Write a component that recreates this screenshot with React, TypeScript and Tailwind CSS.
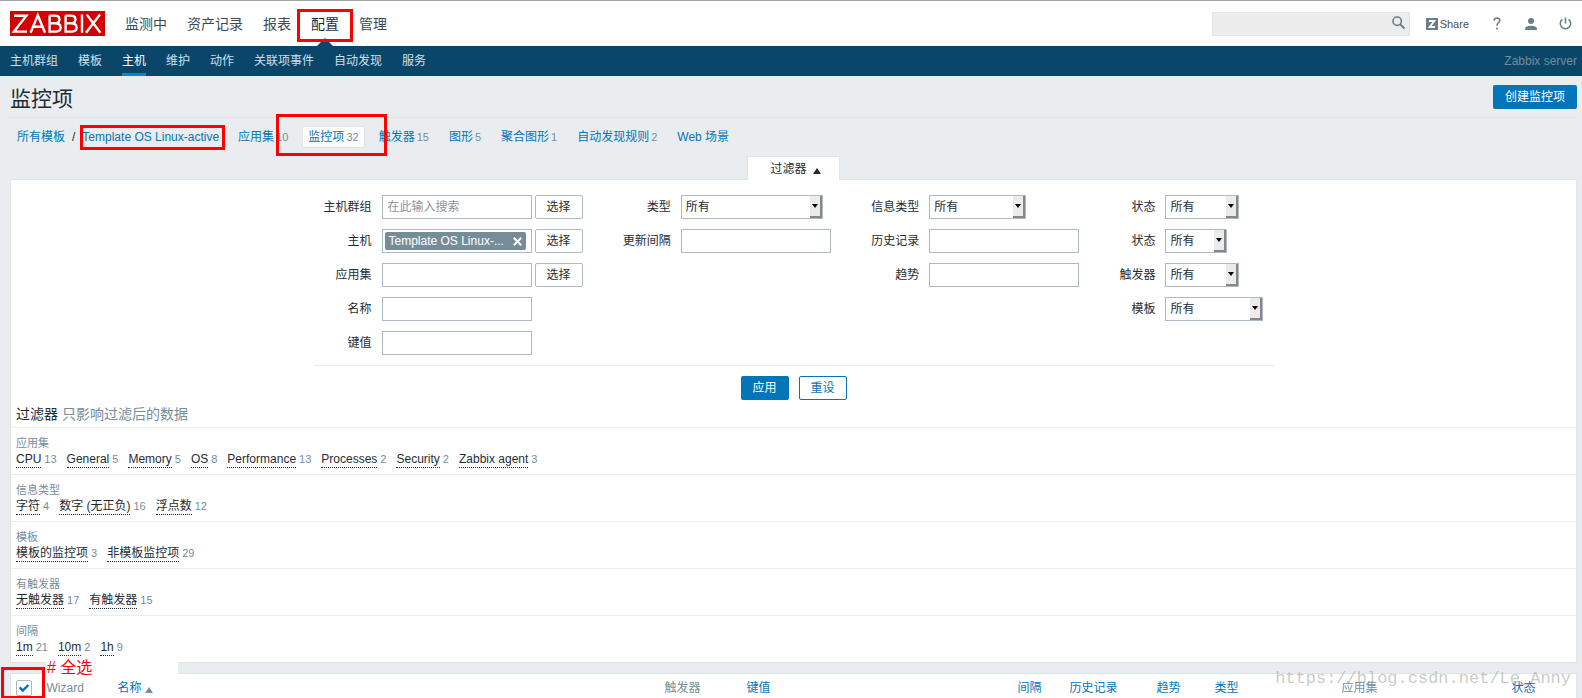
import { useState, type ReactNode } from "react";

const mainMenu = ["监测中", "资产记录", "报表", "配置", "管理"];
const subMenu = ["主机群组", "模板", "主机", "维护", "动作", "关联项事件", "自动发现", "服务"];

const tabs = [
  { label: "应用集", count: 10 },
  { label: "监控项", count: 32 },
  { label: "触发器", count: 15 },
  { label: "图形", count: 5 },
  { label: "聚合图形", count: 1 },
  { label: "自动发现规则", count: 2 },
  { label: "Web 场景" },
];

const subfilters = [
  {
    title: "应用集",
    items: [
      ["CPU", 13],
      ["General", 5],
      ["Memory", 5],
      ["OS", 8],
      ["Performance", 13],
      ["Processes", 2],
      ["Security", 2],
      ["Zabbix agent", 3],
    ],
  },
  {
    title: "信息类型",
    items: [
      ["字符", 4],
      ["数字 (无正负)", 16],
      ["浮点数", 12],
    ],
  },
  {
    title: "模板",
    items: [
      ["模板的监控项", 3],
      ["非模板监控项", 29],
    ],
  },
  {
    title: "有触发器",
    items: [
      ["无触发器", 17],
      ["有触发器", 15],
    ],
  },
  {
    title: "间隔",
    items: [
      ["1m", 21],
      ["10m", 2],
      ["1h", 9],
    ],
  },
];

const textInput =
  "h-6 w-[150px] border border-[#acbbc2] bg-white px-[5px] text-xs placeholder:text-[#8b949a] focus:outline-none";

type FieldProps = { id: string; label: string; labelWidth: string; children: ReactNode };

function Field({ id, label, labelWidth, children }: FieldProps) {
  return (
    <div className="flex h-6 items-center gap-2.5">
      <label htmlFor={id} className={`${labelWidth} shrink-0 text-right`}>
        {label}
      </label>
      <div className="flex items-center gap-[3px]">{children}</div>
    </div>
  );
}

function SelectButton() {
  return (
    <button type="button" className="h-6 w-12 rounded-xs border border-[#acbbc2] bg-white text-xs">
      选择
    </button>
  );
}

function Dropdown({ id, width }: { id: string; width: string }) {
  return (
    <div className={`relative h-6 ${width}`}>
      <select
        id={id}
        className="h-6 w-full appearance-none border border-[#acbbc2] bg-white pl-1 text-xs focus:outline-none"
      >
        <option>所有</option>
      </select>
      {/* Raised arrow button */}
      <span className="pointer-events-none absolute top-px right-px flex h-[22px] w-3 items-center justify-center border-r-2 border-b-2 border-[#868686] bg-[#ebebeb]">
        <svg width="6" height="4" viewBox="0 0 6 4">
          <path d="M0 0h6L3 4z" fill="#000" />
        </svg>
      </span>
    </div>
  );
}

export default function App() {
  const [host, setHost] = useState("Template OS Linux-...");
  const [allSelected, setAllSelected] = useState(true);

  return (
    <div className="min-h-screen bg-[#e9edf0] font-['Liberation_Sans','Noto_Sans_CJK_SC',sans-serif] text-xs leading-4 text-[#1f2c33]">
      {/* Header */}
      <header className="flex h-[46px] items-center justify-between border-t border-[#a5a5a5] bg-white pl-2.5 pr-2.5">
        <div className="flex items-center">
          <a href="#" aria-label="Zabbix" className="block">
            <svg width="95" height="25" viewBox="0 0 95 25">
              <rect width="95" height="25" fill="#d40000" />
              <g fill="none" stroke="#fff" strokeWidth="2.4">
                <path d="M4 4.8H16.4L4 20.6H17" />
                <path d="M20.6 21.8L27.8 4.2L35 21.8M23 15.8H32.6" />
                <path d="M39.6 4.6V20.6H45Q50.6 20.6 50.6 16.4Q50.6 12.4 45 12.2H39.6M44.8 12.2Q49.4 12 49.4 8.4Q49.4 4.6 44.6 4.6H39.6" />
                <path d="M55.6 4.6V20.6H61Q66.6 20.6 66.6 16.4Q66.6 12.4 61 12.2H55.6M60.8 12.2Q65.4 12 65.4 8.4Q65.4 4.6 60.6 4.6H55.6" />
                <path d="M72 3.4V21.8" />
                <path d="M76.8 3.6L90.4 21.8M90 3.6L76 21.8" />
              </g>
            </svg>
          </a>
          <nav className="ml-5 flex gap-5 text-sm">
            {mainMenu.map((item) => (
              <a key={item} href="#" className="relative">
                <span className={item === "配置" ? "text-[#1f2c33]" : "text-[#3c4a52]"}>{item}</span>
                {item === "配置" && (
                  <>
                    <svg className="absolute top-6 left-1.5" width="16" height="8" viewBox="0 0 16 8">
                      <path d="M0 8L8 0L16 8z" fill="#0a466a" />
                    </svg>
                    <span className="absolute -top-[5px] -left-3.5 h-[33px] w-14 border-[3px] border-[#ff0000]" />
                  </>
                )}
              </a>
            ))}
          </nav>
        </div>

        <div className="flex items-center text-[#66757f]">
          <div className="relative">
            <input
              type="search"
              aria-label="搜索"
              className="block h-6 w-[198px] border border-[#e4e4e4] bg-[#ececec] pl-1 pr-6 focus:outline-none"
            />
            <svg className="absolute top-1 right-1" width="14" height="14" viewBox="0 0 14 14" fill="none" stroke="#6b7e89">
              <circle cx="5.2" cy="5.2" r="4.2" strokeWidth="1.6" />
              <path d="M8.2 8.2L12.6 12.6" strokeWidth="2" />
            </svg>
          </div>
          <a href="#" className="ml-4 flex items-center gap-0.5 text-[11px] text-[#44525a]">
            <svg width="12" height="12" viewBox="0 0 12 12">
              <rect width="12" height="12" fill="#6b7e89" />
              <path d="M3 3H8.4L3.6 9H9" fill="none" stroke="#fff" strokeWidth="1.8" />
            </svg>
            Share
          </a>
          <a href="#" aria-label="帮助" className="ml-6">
            <svg width="8" height="13" viewBox="0 0 8 13" fill="none" stroke="#6b7e89" strokeWidth="1.6">
              <path d="M1 3.6Q1.2 1 4 1Q6.8 1 6.8 3.4Q6.8 4.9 5.2 5.9Q4 6.8 4 8.8M4 10.6V12.4" />
            </svg>
          </a>
          <a href="#" aria-label="用户" className="ml-6">
            <svg width="12" height="12" viewBox="0 0 12 12" fill="#6b7e89">
              <circle cx="6" cy="3" r="3" />
              <path d="M0 12V10.4Q0.6 8 6 7.8Q11.4 8 12 10.4V12z" />
            </svg>
          </a>
          <a href="#" aria-label="退出" className="ml-[22px]">
            <svg width="13" height="13" viewBox="0 0 13 13" fill="none" stroke="#6b7e89" strokeWidth="1.6">
              <path d="M6.5 0.5V6.5M3.4 2.4A5.2 5.2 0 1 0 9.6 2.4" />
            </svg>
          </a>
        </div>
      </header>

      {/* Sub navigation */}
      <nav className="flex h-[30px] items-center bg-[#0a466a] pl-2.5 pr-[5px] text-[#cce0ee]">
        <div className="flex h-full gap-5">
          {subMenu.map((item) => (
            <a
              key={item}
              href="#"
              className={
                item === "主机"
                  ? "flex items-center border-y-3 border-t-transparent border-b-[#1281c8] text-white"
                  : "flex items-center"
              }
            >
              {item}
            </a>
          ))}
        </div>
        <span className="ml-auto text-[#768d99]">Zabbix server</span>
      </nav>

      <main className="pl-2.5 pr-[5px]">
        {/* Title */}
        <div className="flex h-[42px] items-center justify-between border-b border-[#dfe4e7]">
          <h1 className="pt-1 text-[21px]">监控项</h1>
          <button type="button" className="h-6 w-[84px] rounded-xs bg-[#0275b8] text-white">
            创建监控项
          </button>
        </div>

        {/* Breadcrumbs */}
        <div className="flex h-[38px] items-center pl-[7px] text-[#0275b8]">
          <a href="#">所有模板</a>
          <span className="mx-[7px] text-[#1f2c33]">/</span>
          <a href="#" className="relative">
            Template OS Linux-active
            <span className="absolute -top-1 -right-1.5 -left-0.5 h-[25px] border-[3px] border-[#ff0000]" />
          </a>
          <div className="ml-[13px] flex items-center gap-2">
            {tabs.map((tab) => (
              <a
                key={tab.label}
                href="#"
                className={
                  tab.label === "监控项"
                    ? "relative rounded-xs border border-[#dfe4e7] bg-white px-[5px] py-0.5"
                    : "px-1.5 py-0.5"
                }
              >
                {tab.label}
                {tab.count && <span className="ml-0.5 text-[11px] text-[#768d99]">{tab.count}</span>}
                {tab.label === "监控项" && (
                  <span className="absolute -top-[13px] -left-[27px] z-10 h-[42px] w-[111px] border-[3px] border-[#ff0000]" />
                )}
              </a>
            ))}
          </div>
        </div>

        {/* Filter toggle */}
        <div className="flex justify-center">
          <button
            type="button"
            className="relative -mb-px h-6 w-[93px] border border-b-0 border-[#dfe4e7] bg-white pl-1"
          >
            <span className="flex items-center justify-center gap-1.5">
              过滤器
              <svg className="mt-1" width="8" height="6" viewBox="0 0 8 6">
                <path d="M0 6L4 0L8 6z" fill="#1f2c33" />
              </svg>
            </span>
          </button>
        </div>

        {/* Filter */}
        <section className="border border-[#dfe4e7] bg-white">
          <form onSubmit={(e) => e.preventDefault()}>
            <div className="mx-auto flex max-w-[960px] justify-between border-b border-[#ebeef0] pt-[15px] pr-2.5 pb-2.5">
              <div className="flex flex-col gap-2.5">
                <Field id="group" label="主机群组" labelWidth="w-[58px]">
                  <input id="group" className={textInput} placeholder="在此输入搜索" />
                  <SelectButton />
                </Field>
                <Field id="host" label="主机" labelWidth="w-[58px]">
                  <div className="flex h-6 w-[150px] items-center border border-[#acbbc2] bg-white px-0.5">
                    {host && (
                      <span className="flex h-[18px] w-[141px] shrink-0 items-center justify-between rounded-xs bg-[#768d99] px-1 text-white">
                        {host}
                        <button type="button" aria-label="移除" onClick={() => setHost("")}>
                          <svg width="9" height="9" viewBox="0 0 9 9" stroke="#fff" strokeWidth="2">
                            <path d="M0.8 0.8L8.2 8.2M8.2 0.8L0.8 8.2" />
                          </svg>
                        </button>
                      </span>
                    )}
                    <input id="host" className="min-w-0 flex-1 focus:outline-none" />
                  </div>
                  <SelectButton />
                </Field>
                <Field id="application" label="应用集" labelWidth="w-[58px]">
                  <input id="application" className={textInput} />
                  <SelectButton />
                </Field>
                <Field id="name" label="名称" labelWidth="w-[58px]">
                  <input id="name" className={textInput} />
                </Field>
                <Field id="key" label="键值" labelWidth="w-[58px]">
                  <input id="key" className={textInput} />
                </Field>
              </div>

              <div className="flex flex-col gap-2.5">
                <Field id="type" label="类型" labelWidth="w-[78px]">
                  <Dropdown id="type" width="w-[142px]" />
                </Field>
                <Field id="delay" label="更新间隔" labelWidth="w-[78px]">
                  <input id="delay" className={textInput} />
                </Field>
              </div>

              <div className="flex flex-col gap-2.5">
                <Field id="value-type" label="信息类型" labelWidth="w-[78px]">
                  <Dropdown id="value-type" width="w-[97px]" />
                </Field>
                <Field id="history" label="历史记录" labelWidth="w-[78px]">
                  <input id="history" className={textInput} />
                </Field>
                <Field id="trends" label="趋势" labelWidth="w-[78px]">
                  <input id="trends" className={textInput} />
                </Field>
              </div>

              <div className="flex flex-col gap-2.5">
                <Field id="state" label="状态" labelWidth="w-[66px]">
                  <Dropdown id="state" width="w-[74px]" />
                </Field>
                <Field id="status" label="状态" labelWidth="w-[66px]">
                  <Dropdown id="status" width="w-[62px]" />
                </Field>
                <Field id="triggers" label="触发器" labelWidth="w-[66px]">
                  <Dropdown id="triggers" width="w-[74px]" />
                </Field>
                <Field id="templated" label="模板" labelWidth="w-[66px]">
                  <Dropdown id="templated" width="w-[98px]" />
                </Field>
              </div>
            </div>

            <div className="flex justify-center gap-2.5 pt-2.5">
              <button type="submit" className="h-6 w-12 rounded-xs bg-[#0275b8] text-white">
                应用
              </button>
              <button
                type="reset"
                className="h-6 w-12 rounded-xs border border-[#0275b8] bg-white text-[#0275b8]"
              >
                重设
              </button>
            </div>
          </form>

          {/* Subfilters */}
          <h2 className="flex h-[27px] items-center gap-1 pl-[5px] text-sm">
            过滤器 <span className="text-[#768d99]">只影响过滤后的数据</span>
          </h2>
          {subfilters.map((group) => (
            <div key={group.title} className="h-[47px] border-t border-[#ebeef0] pt-[7px] pl-[5px]">
              <h3 className="text-[11px] text-[#768d99]">{group.title}</h3>
              <div className="flex gap-2.5">
                {group.items.map(([label, count]) => (
                  <span key={label} className="flex gap-[3px]">
                    <a href="#" className="border-b border-dotted border-[#1f2c33]">
                      {label}
                    </a>
                    <span className="text-[11px] text-[#768d99]">{count}</span>
                  </span>
                ))}
              </div>
            </div>
          ))}
        </section>

        {/* Items */}
        <div className="relative pt-2.5">
          <table className="w-full table-fixed border border-b-0 border-[#dfe4e7] bg-white text-left text-[#0275b8]">
            <thead>
              <tr className="h-[25px] *:p-0 *:pt-1 *:font-normal">
                <th className="w-9">
                  <span className="relative ml-[5px] block size-4">
                    <input
                      type="checkbox"
                      aria-label="全选"
                      checked={allSelected}
                      onChange={(e) => setAllSelected(e.target.checked)}
                      className="block size-4 appearance-none rounded-xs border border-[#acbbc2] bg-white"
                    />
                    {allSelected && (
                      <svg
                        className="pointer-events-none absolute inset-0"
                        width="16"
                        height="16"
                        viewBox="0 0 16 16"
                        fill="none"
                        stroke="#0275b8"
                        strokeWidth="2.4"
                      >
                        <path d="M3.6 7.4L6.8 10.6L12.4 5" />
                      </svg>
                    )}
                  </span>
                </th>
                <th className="w-[71px] text-[#768d99]">Wizard</th>
                <th>
                  <a href="#" className="flex items-center gap-[3px]">
                    名称
                    <svg className="mt-1" width="8" height="6" viewBox="0 0 8 6">
                      <path d="M0 6L4 0L8 6z" fill="#768d99" />
                    </svg>
                  </a>
                </th>
                <th className="w-[82px] text-[#768d99]">触发器</th>
                <th className="w-[271px]">
                  <a href="#">键值</a>
                </th>
                <th className="w-[52px]">
                  <a href="#">间隔</a>
                </th>
                <th className="w-[87px]">
                  <a href="#">历史记录</a>
                </th>
                <th className="w-[58px]">
                  <a href="#">趋势</a>
                </th>
                <th className="w-[127px]">
                  <a href="#">类型</a>
                </th>
                <th className="w-[170px] text-[#768d99]">应用集</th>
                <th className="w-[65px]">
                  <a href="#">状态</a>
                </th>
              </tr>
            </thead>
          </table>

          {/* Notes over the table head */}
          <p className="absolute -top-px left-9 h-3 w-[132px] bg-white pl-px text-base leading-3 text-[#ff0000]">
            # 全选
          </p>
          <span className="pointer-events-none absolute top-1 -left-[9px] h-8 w-11 border-[3px] border-[#ff0000]" />
          <p className="pointer-events-none absolute top-1 right-1.5 font-['Liberation_Mono',monospace] text-[17px] leading-6 text-[#a8a8a0]/60">
            https://blog.csdn.net/Le_Anny
          </p>
        </div>
      </main>
    </div>
  );
}
